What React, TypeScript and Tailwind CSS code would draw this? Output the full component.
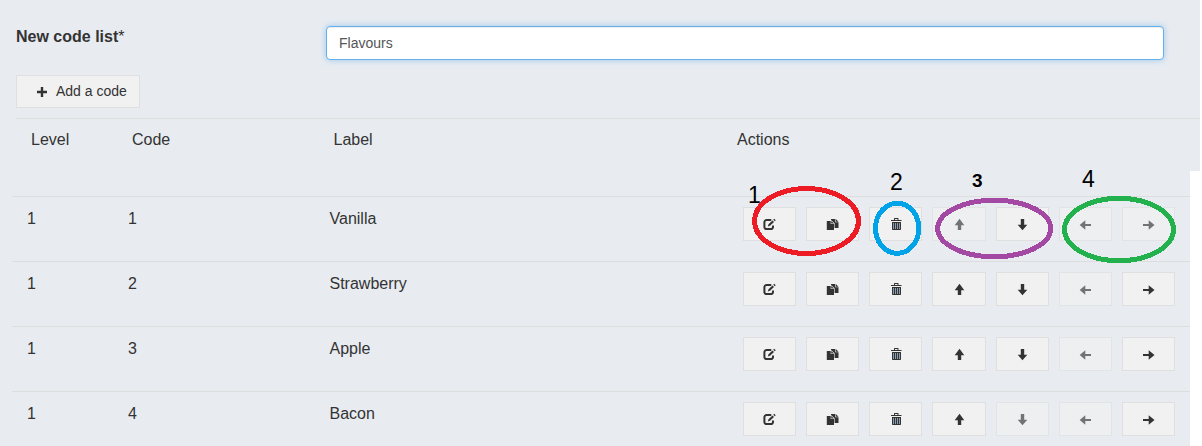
import type { ReactNode } from "react";

type IconName = "edit" | "copy" | "trash" | "up" | "down" | "left" | "right";

const glyphs: Record<IconName, ReactNode> = {
  edit: (
    <>
      <path d="M9.300 3H4.600A2.200 2.200 0 0 0 2.400 5.200V9.900A2.200 2.200 0 0 0 4.600 12.100H8.800A2.200 2.200 0 0 0 11 9.900V8.500" fill="none" stroke="currentColor" strokeWidth="2" />
      <path d="M5.800 9.500 6.500 7.300 10.500 3.400 12 4.900 8 8.800ZM11.200 2.700 12.200 1.800 13.700 3.300 12.800 4.200Z" />
    </>
  ),
  copy: (
    <>
      <path d="M1.800 4H5.700V7H9V13H1.800ZM6.200 4 9 6.500H6.200Z" />
      <path d="M6 2H10.200V5.300H13.500V11H9.600V6.200L6 3Z M10.800 2 13.500 4.700H10.800Z" />
    </>
  ),
  trash: (
    <>
      <path d="M3 3H6V1.500Q6 1 6.500 1H10Q10.500 1 10.500 1.500V3H13.500V4H3ZM7 2V3H9.500V2Z" fillRule="evenodd" />
      <path d="M4 5H13V12.200Q13 13 12.200 13H4.800Q4 13 4 12.200Z" />
      <path d="M5.500 6V12M7.500 6V12M9.500 6V12M11.500 6V12" stroke="#8c9cb2" strokeWidth="1" />
    </>
  ),
  up: <path d="M8.500 1.700 13.300 8.200H10.200V13H6.800V8.200H3.700Z" />,
  down: <path d="M7.500 13.300 2.700 7.800H5.800V2H9.200V7.800H12.300Z" />,
  left: <path d="M1.700 8 7.300 3.300V6.900H13V9.100H7.300V12.700Z" />,
  right: <path d="M13.500 8 7.700 3.300V6.900H2V9.100H7.700V12.700Z" />,
};

function ActionButton({ icon, disabled = false }: { icon: IconName; disabled?: boolean }) {
  return (
    <button
      aria-label={icon}
      disabled={disabled}
      className={`flex h-[34px] shrink-0 items-start justify-center border border-[#dfdfdf] bg-[#f1f1f1] pt-[9px] text-[#333] ${
        icon === "up" ? "w-[54px] pr-px" : "w-[53px]"
      } ${disabled ? "opacity-65" : ""}`}
    >
      <svg width="15" height="14" viewBox="0 0 15 14" fill="currentColor">
        {glyphs[icon]}
      </svg>
    </button>
  );
}

const rows: { code: string; label: string; disabled: IconName[] }[] = [
  { code: "1", label: "Vanilla", disabled: ["up", "left", "right"] },
  { code: "2", label: "Strawberry", disabled: ["left"] },
  { code: "3", label: "Apple", disabled: ["left"] },
  { code: "4", label: "Bacon", disabled: ["down", "left"] },
];

const actions: IconName[] = ["edit", "copy", "trash", "up", "down", "left", "right"];

function Annotations() {
  return (
    <div className="pointer-events-none absolute inset-0 leading-none text-black">
      <svg width="1202" height="446" fill="none" strokeWidth="5" shapeRendering="crispEdges">
        <ellipse cx="806.500" cy="221" rx="52" ry="32.500" stroke="#ed1c24" />
        <ellipse cx="897.200" cy="228.300" rx="21.700" ry="25" stroke="#00a2e8" />
        <ellipse cx="994.200" cy="228.500" rx="56.500" ry="28.300" stroke="#a349a4" />
        <ellipse cx="1119" cy="229.500" rx="54.500" ry="31.200" stroke="#22b14c" />
      </svg>
      <span className="absolute left-[748px] top-[184px] text-[23px]">1</span>
      <span className="absolute left-[890px] top-[171px] text-[23px]">2</span>
      <span className="absolute left-[972px] top-[171px] text-[19px] font-bold">3</span>
      <span className="absolute left-[1082px] top-[168px] text-[23px]">4</span>
    </div>
  );
}

export default function App() {
  return (
    <div className="relative flex h-[446px] w-[1202px] flex-col overflow-hidden bg-white font-['Liberation_Sans',Arial,sans-serif] text-[16px] text-[#333]">
      <div className="h-[171px] w-[1200px] shrink-0 bg-[#e8ecf1]">
        <div className="flex h-[75px] items-start pl-4">
          <label className="w-[310px] pt-[25px] font-bold leading-6">
            New code list<span className="font-normal">*</span>
          </label>
          <input
            defaultValue="Flavours"
            className="mt-[26px] h-[34px] w-[838px] rounded-[4px] border border-[#66afe9] bg-white px-3 text-[14px] text-[#555] shadow-[inset_0_1px_1px_rgba(0,0,0,0.075),0_0_6px_rgba(102,175,233,0.6)] outline-none"
          />
        </div>
        <div className="flex h-[43px] pl-4">
          <button className="flex h-[33px] w-[124px] items-center border border-[#dfdfdf] bg-[#f1f1f1] pl-5 text-[14px]">
            <svg width="10" height="10" viewBox="0 0 10 10" fill="currentColor" className="mt-px mr-[9px]">
              <path d="M3.800 0H6.200V3.800H10V6.200H6.200V10H3.800V6.200H0V3.800H3.800Z" />
            </svg>
            Add a code
          </button>
        </div>
        <div className="ml-4 flex border-t border-[#dddddd] pl-[15px] pt-[9px] leading-6">
          <div className="w-[101px]">Level</div>
          <div className="w-[201.500px]">Code</div>
          <div className="w-[403.500px]">Label</div>
          <div>Actions</div>
        </div>
      </div>
      <div className="h-[275px] w-[1190px] shrink-0 bg-[#e8ecf1] pl-3 pt-[25px]">
        {rows.map((row) => (
          <div key={row.code} className="flex h-[65px] border-t border-[#dddddd] pl-[15px]">
            <div className="w-[101px] pt-[10px] leading-6">1</div>
            <div className="w-[201.500px] pt-[10px] leading-6">{row.code}</div>
            <div className="w-[413.500px] pt-[10px] leading-6">{row.label}</div>
            <div className="flex gap-[10px] pt-[10px]">
              {actions.map((icon) => (
                <ActionButton key={icon} icon={icon} disabled={row.disabled.includes(icon)} />
              ))}
            </div>
          </div>
        ))}
      </div>
      <Annotations />
    </div>
  );
}
